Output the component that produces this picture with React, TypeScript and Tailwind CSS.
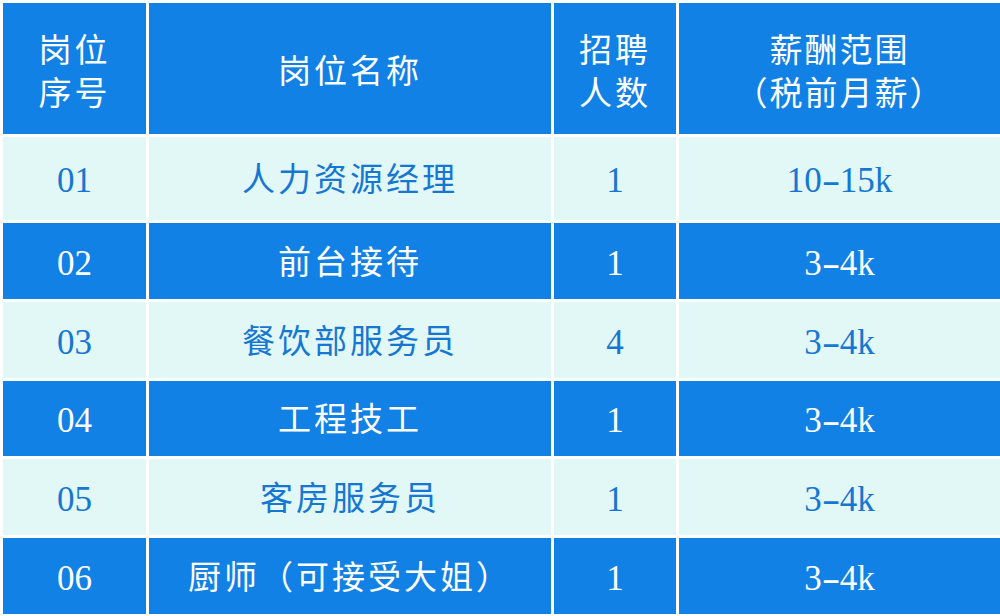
const rows = [
  { no: '01', name: '人力资源经理', count: '1', pay: ['10', '15k'], h: 'h-[83px]' },
  { no: '02', name: '前台接待', count: '1', pay: ['3', '4k'], h: 'h-[76px]' },
  { no: '03', name: '餐饮部服务员', count: '4', pay: ['3', '4k'], h: 'h-[76px]' },
  { no: '04', name: '工程技工', count: '1', pay: ['3', '4k'], h: 'h-[75px]' },
  { no: '05', name: '客房服务员', count: '1', pay: ['3', '4k'], h: 'h-[76px]' },
  { no: '06', name: '厨师（可接受大姐）', count: '1', pay: ['3', '4k'], h: 'h-[76px]' },
]

const font = '[font-family:"Liberation_Serif","Noto_Sans_CJK_SC",serif]'

function Cell({ children, light, h }: { children: React.ReactNode; light: boolean; h: string }) {
  return (
    <div
      className={`${h} flex items-center justify-center text-center ${
        light ? 'bg-[#e2f8f6] text-[#1677d2]' : 'bg-[#1181e5] text-white'
      }`}
    >
      {children}
    </div>
  )
}

export default function App() {
  return (
    <div className="w-[1000px] h-[616px] bg-white pt-[3px] pl-[3px] overflow-hidden">
      <div
        className={`grid grid-cols-[143px_402px_122px_321px] gap-[3px] text-[33px] leading-[43px] ${font}`}
      >
        <Cell light={false} h="h-[131px]">
          <span className="pt-2 tracking-[3px]">
            岗位
            <br />
            序号
          </span>
        </Cell>
        <Cell light={false} h="h-[131px]">
          <span className="pt-2 tracking-[3px]">岗位名称</span>
        </Cell>
        <Cell light={false} h="h-[131px]">
          <span className="pt-2 tracking-[3px]">
            招聘
            <br />
            人数
          </span>
        </Cell>
        <Cell light={false} h="h-[131px]">
          <span className="pt-2 tracking-[2px]">
            薪酬范围
            <br />
            （税前月薪）
          </span>
        </Cell>

        {rows.map((r, i) => {
          const light = i % 2 === 0
          return [
            <Cell key={r.no + 'a'} light={light} h={r.h}>
              <span className="pt-1 text-[35px]">{r.no}</span>
            </Cell>,
            <Cell key={r.no + 'b'} light={light} h={r.h}>
              <span className="pt-1 tracking-[3px]">{r.name}</span>
            </Cell>,
            <Cell key={r.no + 'c'} light={light} h={r.h}>
              <span className="pt-1 text-[35px]">{r.count}</span>
            </Cell>,
            <Cell key={r.no + 'd'} light={light} h={r.h}>
              <span className="pt-1 text-[35px] flex items-center">
                {r.pay[0]}
                <span className="inline-block w-[18px] text-center scale-x-[1.6]">-</span>
                {r.pay[1]}
              </span>
            </Cell>,
          ]
        })}
      </div>
    </div>
  )
}
